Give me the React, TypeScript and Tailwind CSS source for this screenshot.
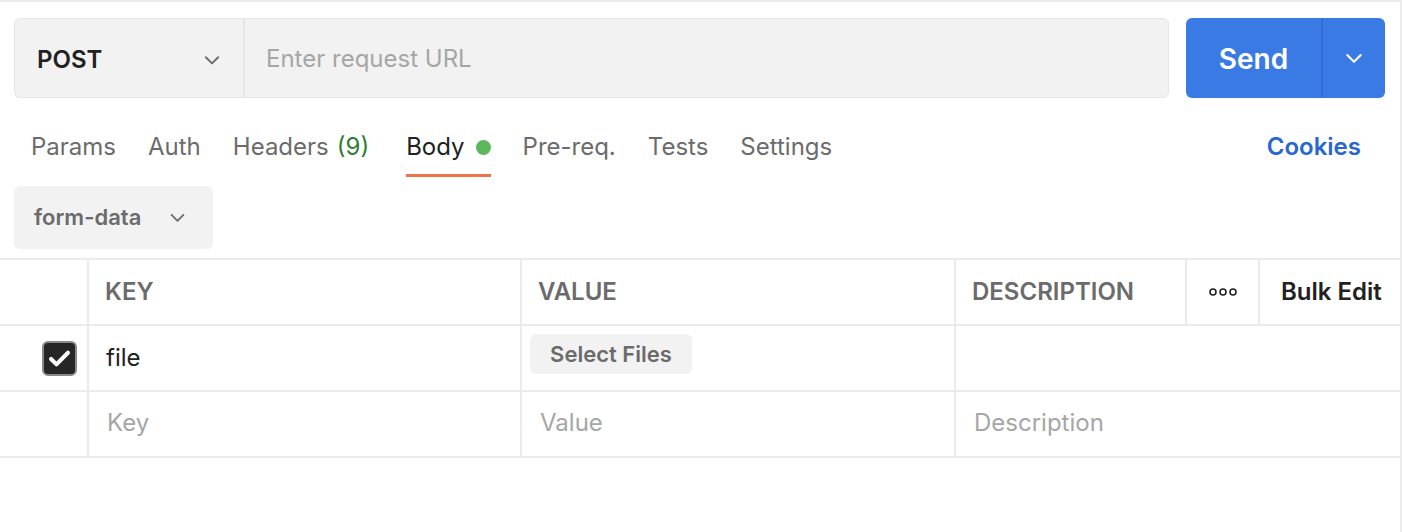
import React from 'react';

const Chevron = ({ className = '' }: { className?: string }) => (
  <svg viewBox="0 0 16 16" className={className} fill="none" stroke="currentColor" strokeWidth="1.4" strokeLinecap="round" strokeLinejoin="round">
    <path d="M3.5 6l4.5 4.5L12.5 6" />
  </svg>
);

const tabs = [
  { label: 'Params' },
  { label: 'Auth' },
  { label: 'Headers', count: '(9)' },
  { label: 'Body', active: true, dot: true },
  { label: 'Pre-req.' },
  { label: 'Tests' },
  { label: 'Settings' },
];

const App: React.FC = () => {
  return (
    <div
      className="w-[1402px] h-[532px] bg-white border-t-2 border-r-2 border-[#ebebeb] overflow-hidden text-[#212121]"
      style={{ fontFamily: 'Inter, "Noto Sans", sans-serif' }}
    >
      {/* request bar */}
      <div className="flex items-stretch gap-[17px] pl-[14px] pr-[15px] pt-[16px]">
        <div className="flex flex-1 h-[80px] rounded-[6px] border border-[#e6e6e6] bg-[#f2f2f2]">
          <div className="w-[230px] flex items-center justify-between pl-[22px] pr-[20px] pt-[3px] border-r-2 border-[#e6e6e6]">
            <span className="text-[24px] font-semibold text-[#212121]">POST</span>
            <Chevron className="w-[22px] h-[22px] text-[#6b6b6b]" />
          </div>
          <div className="flex items-center pl-[21px] pt-[2px] text-[24px] text-[#a6a6a6]">Enter request URL</div>
        </div>
        <div className="flex w-[199px] h-[80px] rounded-[6px] bg-[#3a7ae4] text-white">
          <div className="w-[135px] flex items-center justify-center pt-[1px] text-[28px] font-semibold">Send</div>
          <div className="flex-1 flex items-center justify-center border-l-2 border-[#336fd3]">
            <Chevron className="w-[24px] h-[24px]" />
          </div>
        </div>
      </div>

      {/* tabs */}
      <div className="flex items-start justify-between pl-[31px] pr-[39px] mt-[31px] h-[57px]">
        <div className="flex gap-[32px] text-[24px] text-[#6b6b6b]">
          {tabs.map((t) => (
            <div key={t.label} className={`flex flex-col ${t.count ? 'mr-[5px]' : ''}`}>
              <div className={`flex items-center gap-[11px] ${t.active ? 'text-[#212121]' : ''}`}>
                <span>
                  {t.label}
                  {t.count && <span className="text-[#2e7d32] ml-[8px]">{t.count}</span>}
                </span>
                {t.dot && <span className="w-[15px] h-[15px] rounded-full bg-[#5cb85c]" />}
              </div>
              {t.active && <div className="h-[3px] bg-[#ee7547] mt-[9px]" />}
            </div>
          ))}
        </div>
        <div className="text-[24px] font-semibold text-[#2767d0]">Cookies</div>
      </div>

      {/* body type */}
      <div className="pl-[14px]">
        <div className="w-[199px] h-[63px] rounded-[6px] bg-[#f2f2f2] flex items-center justify-between pl-[20px] pr-[25px] text-[#6b6b6b]">
          <span className="text-[22px] font-semibold">form-data</span>
          <Chevron className="w-[21px] h-[21px]" />
        </div>
      </div>

      {/* table */}
      <div className="mt-[9px] border-t-2 border-[#ebebeb] text-[24px]">
        <div className="flex h-[66px] border-b-2 border-[#ebebeb]">
          <div className="w-[89px] border-r-2 border-[#ebebeb]" />
          <div className="w-[433px] border-r-2 border-[#ebebeb] flex items-center pl-[16px] font-semibold text-[#6b6b6b]">KEY</div>
          <div className="w-[434px] border-r-2 border-[#ebebeb] flex items-center pl-[16px] font-semibold text-[#6b6b6b]">VALUE</div>
          <div className="w-[231px] border-r-2 border-[#ebebeb] flex items-center pl-[16px] font-semibold text-[#6b6b6b]">DESCRIPTION</div>
          <div className="w-[73px] border-r-2 border-[#ebebeb] flex items-center justify-center">
            <svg viewBox="0 0 30 10" className="w-[30px] h-[10px]" fill="none" stroke="#212121" strokeWidth="1.6">
              <circle cx="5" cy="5" r="3" />
              <circle cx="15" cy="5" r="3" />
              <circle cx="25" cy="5" r="3" />
            </svg>
          </div>
          <div className="flex-1 flex items-center pl-[21px] font-semibold text-[#212121]">Bulk Edit</div>
        </div>

        <div className="flex h-[66px] border-b-2 border-[#ebebeb]">
          <div className="w-[89px] border-r-2 border-[#ebebeb] flex items-center justify-end pr-[10px]">
            <div className="w-[35px] h-[35px] rounded-[6px] bg-[#262626] border-2 border-[#8a8a8a] flex items-center justify-center">
              <svg viewBox="0 0 16 16" className="w-[27px] h-[27px]" fill="none" stroke="white" strokeWidth="2.4" strokeLinecap="round" strokeLinejoin="round">
                <path d="M3 8.3l3.2 3.2L13 4.6" />
              </svg>
            </div>
          </div>
          <div className="w-[433px] border-r-2 border-[#ebebeb] flex items-center pl-[17px] text-[#212121]">file</div>
          <div className="w-[434px] border-r-2 border-[#ebebeb] flex items-start pt-[8px] pl-[8px]">
            <div className="w-[162px] h-[40px] rounded-[6px] bg-[#f2f2f2] flex items-center justify-center text-[22px] font-semibold text-[#6b6b6b]">Select Files</div>
          </div>
          <div className="flex-1" />
        </div>

        <div className="flex h-[66px] border-b-2 border-[#ebebeb] text-[#a6a6a6]">
          <div className="w-[89px] border-r-2 border-[#ebebeb]" />
          <div className="w-[433px] border-r-2 border-[#ebebeb] flex items-center pl-[18px] pb-[2px]">Key</div>
          <div className="w-[434px] border-r-2 border-[#ebebeb] flex items-center pl-[18px] pb-[2px]">Value</div>
          <div className="flex-1 flex items-center pl-[18px] pb-[2px]">Description</div>
        </div>
      </div>
    </div>
  );
};

export default App;
